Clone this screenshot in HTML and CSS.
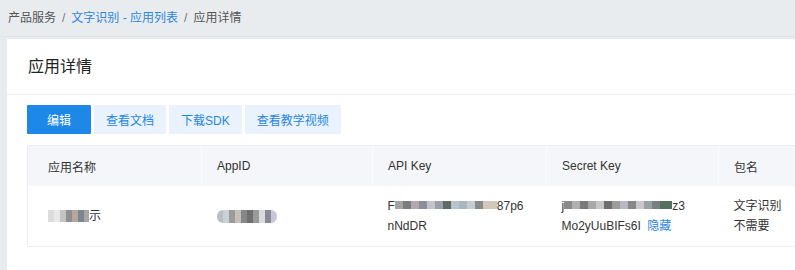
FILE: index.html
```html
<!DOCTYPE html>
<html lang="zh-CN">
<head>
  <meta charset="UTF-8" />
  <title>应用详情</title>
  <link rel="stylesheet" href="styles.css">
</head>
<body>
  <div class="crumbs">
    <span>产品服务</span>
    <span class="sep">/</span>
    <a href="#">文字识别 - 应用列表</a>
    <span class="sep">/</span>
    <span>应用详情</span>
  </div>

  <div class="card">
    <div class="card-title">应用详情</div>
    <div class="card-body">
      <div class="actions">
        <button class="btn btn-primary">编辑</button>
        <button class="btn">查看文档</button>
        <button class="btn">下载SDK</button>
        <button class="btn">查看教学视频</button>
      </div>

      <table class="detail">
        <colgroup>
          <col style="width: 174px">
          <col style="width: 171px">
          <col style="width: 174px">
          <col style="width: 172px">
          <col style="width: 160px">
        </colgroup>
        <thead>
          <tr>
            <th>应用名称</th>
            <th>AppID</th>
            <th>API Key</th>
            <th>Secret Key</th>
            <th>包名</th>
          </tr>
        </thead>
        <tbody>
          <tr>
            <td><span class="blur blur-name"></span>示</td>
            <td><span class="blur blur-id"></span></td>
            <td>F<span class="blur blur-api"></span>87p6<br>nNdDR</td>
            <td>j<span class="blur blur-secret"></span>z3<br>Mo2yUuBIFs6I <a href="#" class="toggle">隐藏</a></td>
            <td>文字识别<br>不需要</td>
          </tr>
        </tbody>
      </table>
    </div>
  </div>
</body>
</html>
```

FILE: styles.css
```css
body {
  margin: 0;
  background: #e9ecef;
  color: #333;
  font-family: "Liberation Sans", "Noto Sans CJK SC", sans-serif;
  font-size: 12px;
  overflow: hidden;
}
a {
  text-decoration: none;
  color: #2b86e1;
}
.crumbs {
  height: 36px;
  line-height: 36px;
  padding: 0 8px;
  color: #555;
  border-bottom: 1px solid #e0e3e7;
  display: flex;
  gap: 4px;
}
.crumbs .sep {
  color: #777;
  margin: 0 2px;
}
.card {
  background: #fff;
  margin: 2px 0 0 7px;
  width: 1000px;
  min-height: 240px;
}
.card-title {
  height: 55px;
  line-height: 55px;
  padding-left: 21px;
  font-size: 16px;
  color: #222;
  border-bottom: 1px solid #eceef1;
}
.card-body {
  padding: 10px 20px;
}
.actions {
  display: flex;
  gap: 3px;
  margin-bottom: 11px;
}
.btn {
  min-width: 64px;
  height: 29px;
  padding: 0 12px;
  border: none;
  border-radius: 1px;
  background: #eaf3fd;
  color: #1f86e3;
  font-family: inherit;
  font-size: 12px;
  cursor: pointer;
}
.btn-primary {
  background: #1e88e8;
  color: #fff;
}
.detail {
  table-layout: fixed;
  border-collapse: collapse;
  width: 851px;
  border-left: 1px solid #eceef1;
}
.detail th {
  height: 40px;
  padding: 0 15px;
  background: #f4f6f9;
  border-top: 1px solid #eceef1;
  border-left: 1px solid #fbfcfd;
  font-weight: normal;
  text-align: left;
}
.detail td {
  height: 40px;
  padding: 10px 15px;
  line-height: 20px;
  border-bottom: 1px solid #eceef1;
  vertical-align: middle;
  white-space: nowrap;
}
.detail th:first-child,
.detail td:first-child {
  padding-left: 20px;
  border-left: none;
}
.toggle {
  margin-left: 3px;
}
.blur {
  display: inline-block;
  vertical-align: middle;
}
.blur-name {
  width: 41px;
  height: 12px;
  margin-top: -2px;
  background: linear-gradient(90deg, #dcdcdc 0 6px, #e9e9e9 6px 12px, #c4c4c4 12px 18px, #8f8f8f 18px 24px, #b9a69a 24px 30px, #7d8590 30px 36px, #a7a7a7 36px);
}
.blur-id {
  width: 60px;
  height: 13px;
  border-radius: 6px;
  background: linear-gradient(90deg, #b9bfc4 0 6px, #c9d1d6 6px 12px, #9c9c9c 12px 18px, #c7c0b8 18px 24px, #878787 24px 30px, #6f6f6f 30px 36px, #9a9a9a 36px 42px, #d8dbde 42px 48px, #8a8a96 48px 54px, #c6c8d8 54px);
}
.blur-api {
  width: 102px;
  height: 8px;
  margin-top: -3px;
  background: linear-gradient(90deg, #a4a4a4 0 8px, #7c7c7c 8px 16px, #b4a8b0 16px 24px, #8e8e9a 24px 32px, #c0c4cc 32px 40px, #9aa0aa 40px 48px, #5f6a62 48px 56px, #b6c4cc 56px 64px, #a8b8c0 64px 72px, #c4ccd0 72px 80px, #8a8a8a 80px 88px, #d0c8b8 88px);
}
.blur-secret {
  width: 108px;
  height: 8px;
  margin-top: -3px;
  background: linear-gradient(90deg, #8a8a8a 0 8px, #b0b0b0 8px 16px, #7a7a7a 16px 24px, #a8a8a8 24px 32px, #c6c6c6 32px 40px, #6e6e6e 40px 48px, #9c9c9c 48px 56px, #b8b8c0 56px 64px, #888 64px 72px, #c8c8c8 72px 80px, #9aa0a8 80px 88px, #7a8080 88px 96px, #567060 96px);
}
```
